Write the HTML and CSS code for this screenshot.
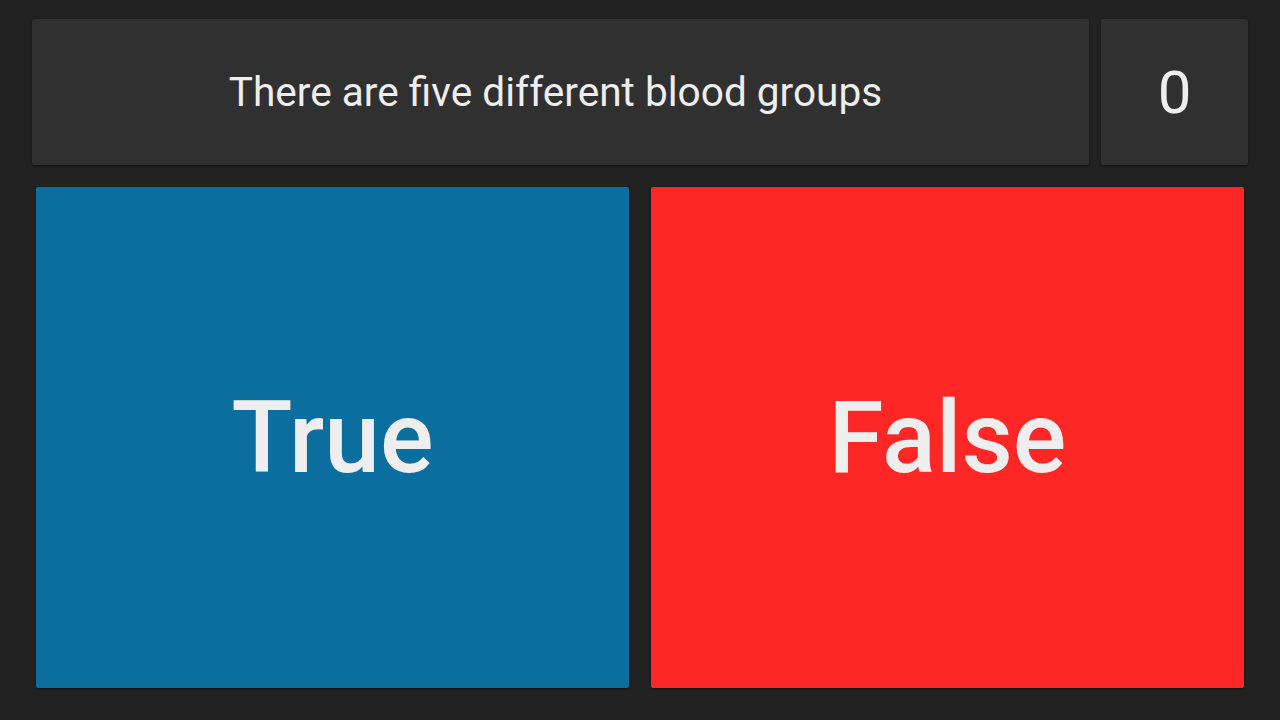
FILE: index.html
```html
<!DOCTYPE html>
<html lang="en">
<head>
    <meta charset="UTF-8">
    <meta name="viewport" content="width=device-width, initial-scale=1.0">
    <title>Quiz</title>
    <link rel="stylesheet" href="styles.css">
</head>
<body>
    <div class="quiz">
        <div class="top_bar">
            <div class="card question">There are five different blood groups</div>
            <div class="card score">0</div>
        </div>
        <div class="answers">
            <button class="answer answer_true">True</button>
            <button class="answer answer_false">False</button>
        </div>
    </div>
</body>
</html>
```

FILE: styles.css
```css
html, body{
    margin: 0;
    height: 100%;
}
body{
    background-color: #222222;
    font-family: Roboto, "Noto Sans", sans-serif;
    color: #eeeeee;
}
.quiz{
    height: 720px;
    box-sizing: border-box;
    padding: 19px 32px 32px;
    display: flex;
    flex-direction: column;
    gap: 22px;
}
.top_bar{
    display: flex;
    gap: 12px;
    height: 146px;
}
.card{
    background-color: #303030;
    border-radius: 2px;
    box-shadow: 0 1px 3px rgba(0, 0, 0, .5);
    display: flex;
    align-items: center;
    justify-content: center;
}
.question{
    flex: 1;
    padding-right: 10px;
    font-size: 40.6px;
}
.score{
    width: 147px;
    font-size: 60px;
    font-weight: 400;
}
.answers{
    flex: 1;
    display: flex;
    gap: 22px;
    padding: 0 4px;
}
.answer{
    flex: 1;
    border: none;
    border-radius: 2px;
    font-family: inherit;
    font-size: 100px;
    font-weight: 500;
    color: #eeeeee;
    box-shadow: 0 1px 3px rgba(0, 0, 0, .5);
}
.answer_true{
    background-color: #0b6e9e;
}
.answer_false{
    background-color: #ff2626;
}
```
